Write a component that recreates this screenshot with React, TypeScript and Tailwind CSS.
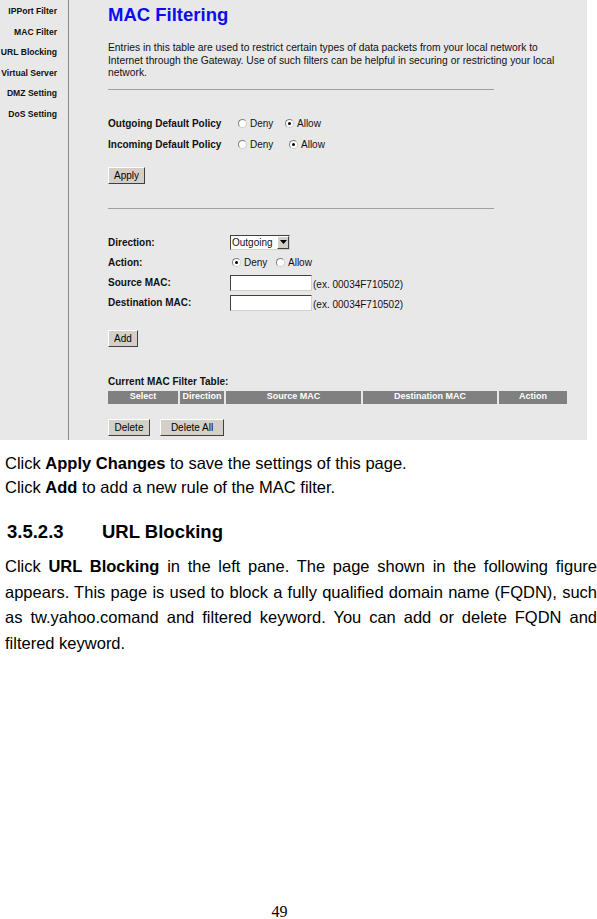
import React from 'react'

const ui = { fontFamily: '"Liberation Sans", Arial, sans-serif' }

function Radio({ checked }: { checked?: boolean }) {
  return (
    <span className="inline-flex w-[9px] h-[9px] rounded-full bg-white border border-[#808080] border-b-[#d4d0c8] border-r-[#d4d0c8] items-center justify-center mr-[3px]">
      {checked && <span className="w-[3px] h-[3px] rounded-full bg-black" />}
    </span>
  )
}

function Btn({ label, className = '' }: { label: string; className?: string }) {
  return (
    <span
      className={`inline-flex items-center justify-center h-[17px] bg-[#d4d0c8] border border-t-white border-l-white border-b-[#404040] border-r-[#404040] text-[10px] text-black ${className}`}
    >
      {label}
    </span>
  )
}

function Input() {
  return <span className="inline-block w-[82px] h-[16px] bg-white border border-t-[#404040] border-l-[#404040] border-b-[#d4d0c8] border-r-[#d4d0c8]" />
}

export default function App() {
  const menu = ['IPPort Filter', 'MAC Filter', 'URL Blocking', 'Virtual Server', 'DMZ Setting', 'DoS Setting']

  return (
    <div className="w-[597px] h-[919px] bg-white relative overflow-hidden">
      {/* Router screenshot */}
      <div className="w-[587px] h-[440px] bg-[#e8e8e8] flex text-[#111]" style={ui}>
        <div className="w-[69px] shrink-0 border-r border-[#8a8a8a] pt-[5px] pr-[11px] flex flex-col items-end overflow-hidden">
          {menu.map((m) => (
            <div key={m} className="h-[20.6px] leading-[12px] text-[8.6px] font-bold whitespace-nowrap">
              {m}
            </div>
          ))}
        </div>

        <div className="flex-1 pl-[39px]">
          <div className="pt-[4px] h-[26px] leading-[22px] text-[18.5px] font-bold text-[#0c0cf0]">MAC Filtering</div>
          <div className="mt-[16px] text-[10.3px] leading-[12.5px] whitespace-nowrap">
            Entries in this table are used to restrict certain types of data packets from your local network to
            <br />
            Internet through the Gateway. Use of such filters can be helpful in securing or restricting your local
            <br />
            network.
          </div>
          <div className="mt-[9px] w-[386px] h-px bg-[#a0a0a0]" />

          <div className="mt-[23px] text-[10px]">
            <div className="flex items-center h-[21px]">
              <span className="w-[130px] font-bold">Outgoing Default Policy</span>
              <Radio />
              <span className="w-[35px]">Deny</span>
              <Radio checked />
              <span>Allow</span>
            </div>
            <div className="flex items-center h-[21px]">
              <span className="w-[130px] font-bold">Incoming Default Policy</span>
              <Radio />
              <span className="w-[39px]">Deny</span>
              <Radio checked />
              <span>Allow</span>
            </div>
          </div>

          <div className="mt-[12px] flex">
            <Btn label="Apply" className="w-[37px]" />
          </div>

          <div className="mt-[24px] w-[386px] h-px bg-[#a0a0a0]" />

          <div className="mt-[23px] text-[10px]">
            <div className="flex items-center h-[21px]">
              <span className="w-[122px] font-bold">Direction:</span>
              <span className="flex items-center h-[15px] w-[60px] bg-white border border-t-[#404040] border-l-[#404040] border-b-[#d4d0c8] border-r-[#d4d0c8]">
                <span className="flex-1 pl-[1px] leading-[13px]">Outgoing</span>
                <span className="w-[12px] h-[13px] bg-[#d4d0c8] border border-t-white border-l-white border-b-[#404040] border-r-[#404040] flex items-center justify-center">
                  <svg width="7" height="4" viewBox="0 0 7 4">
                    <path d="M0 0h7L3.5 4z" fill="#000" />
                  </svg>
                </span>
              </span>
            </div>
            <div className="flex items-center h-[20px]">
              <span className="w-[124px] font-bold">Action:</span>
              <Radio checked />
              <span className="w-[32px]">Deny</span>
              <Radio />
              <span>Allow</span>
            </div>
            <div className="flex items-center h-[20px]">
              <span className="w-[122px] font-bold">Source MAC:</span>
              <Input />
              <span className="ml-[1px] pt-[4px]">(ex. 00034F710502)</span>
            </div>
            <div className="flex items-center h-[20px]">
              <span className="w-[122px] font-bold">Destination MAC:</span>
              <Input />
              <span className="ml-[1px] pt-[4px]">(ex. 00034F710502)</span>
            </div>
          </div>

          <div className="mt-[17px] flex">
            <Btn label="Add" className="w-[30px]" />
          </div>

          <div className="mt-[29px] text-[10px] font-bold leading-[12px]">Current MAC Filter Table:</div>
          <div className="mt-[3px] flex gap-[2px] h-[13px] text-[9px] font-bold text-white">
            <div className="w-[70px] bg-[#808080] flex items-center justify-center">Select</div>
            <div className="w-[44px] bg-[#808080] flex items-center justify-center">Direction</div>
            <div className="w-[135px] bg-[#808080] flex items-center justify-center">Source MAC</div>
            <div className="w-[134px] bg-[#808080] flex items-center justify-center">Destination MAC</div>
            <div className="w-[68px] bg-[#808080] flex items-center justify-center">Action</div>
          </div>

          <div className="mt-[15px] flex gap-[10px]">
            <Btn label="Delete" className="w-[42px]" />
            <Btn label="Delete All" className="w-[64px]" />
          </div>
        </div>
      </div>

      {/* Manual text */}
      <div className="text-black text-[16.5px]" style={ui}>
        <div className="pl-[5px] mt-[11px] leading-[24px]">
          <p>
            Click <b>Apply Changes</b> to save the settings of this page.
          </p>
          <p>
            Click <b>Add</b> to add a new rule of the MAC filter.
          </p>
        </div>
        <h3 className="pl-[7px] mt-[21px] text-[18.5px] font-bold flex leading-[24px]">
          <span className="w-[95px]">3.5.2.3</span>
          <span>URL Blocking</span>
        </h3>
        <div className="pl-[5px] mt-[10px] w-[597px] leading-[25.5px]">
          <p className="text-justify [text-align-last:justify]">
            Click <b>URL Blocking</b> in the left pane. The page shown in the following figure
          </p>
          <p className="text-justify [text-align-last:justify]">
            appears. This page is used to block a fully qualified domain name (FQDN), such
          </p>
          <p className="text-justify [text-align-last:justify]">
            as tw.yahoo.comand and filtered keyword. You can add or delete FQDN and
          </p>
          <p>filtered keyword.</p>
        </div>
      </div>

      <div
        className="absolute left-0 right-0 bottom-[-3px] text-center text-[16px] leading-[20px] pr-[38px]"
        style={{ fontFamily: '"Liberation Serif", "Times New Roman", serif' }}
      >
        49
      </div>
    </div>
  )
}
